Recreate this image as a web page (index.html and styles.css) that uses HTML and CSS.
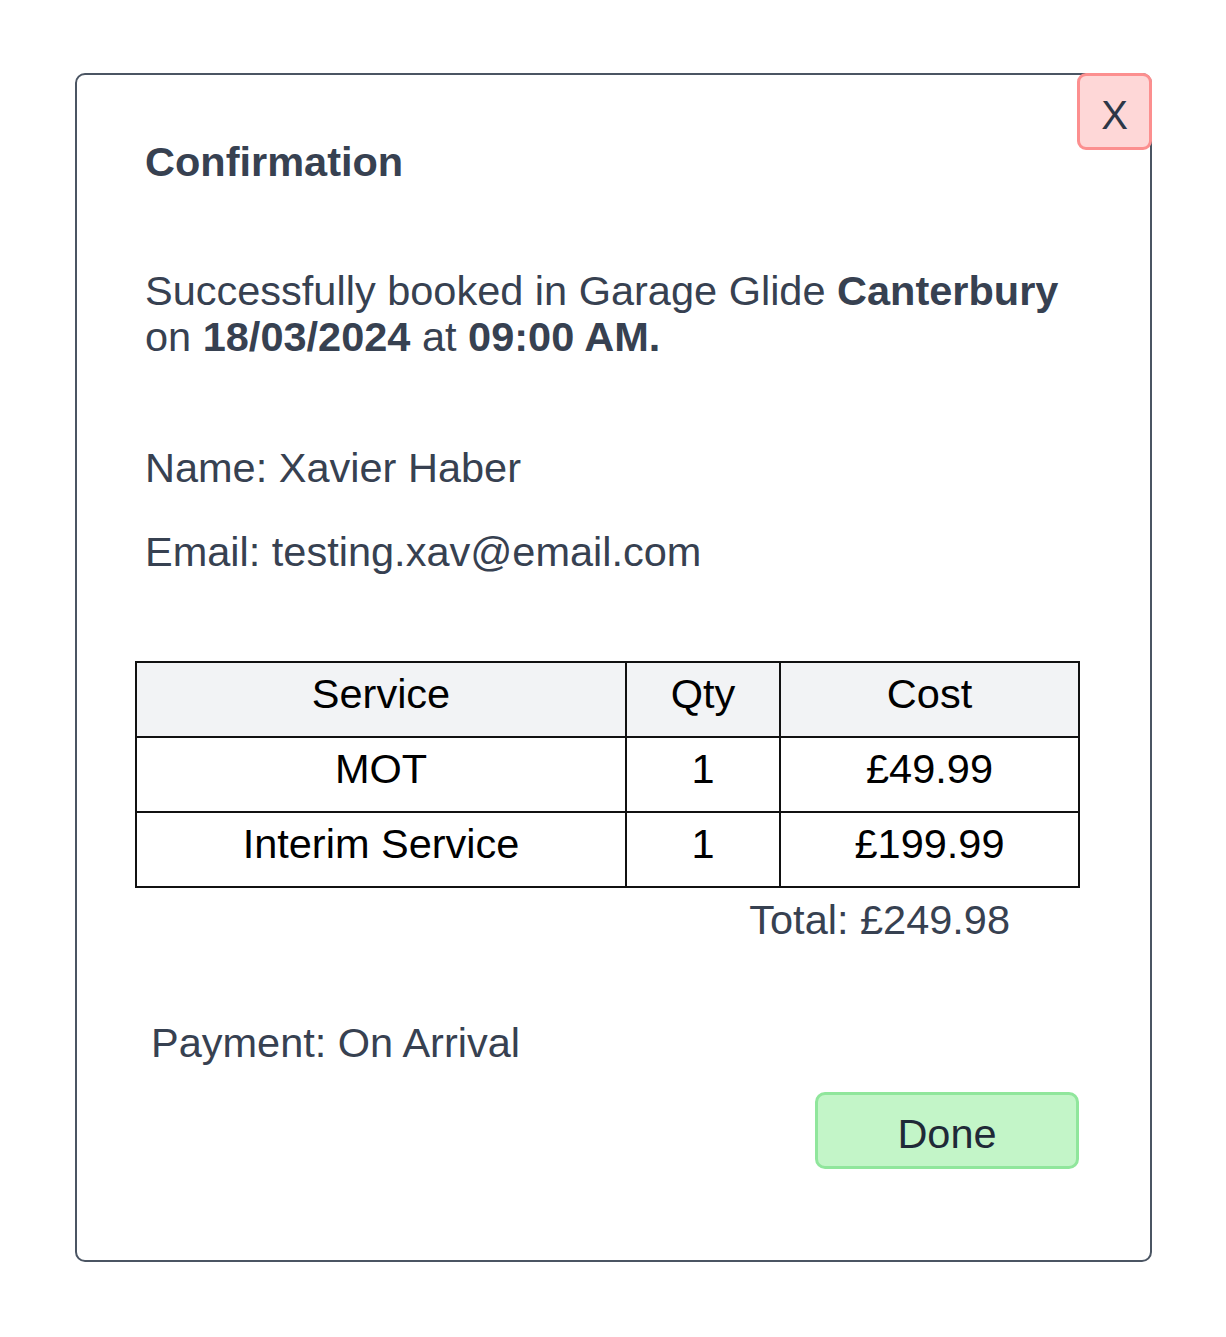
FILE: index.html
```html
<!DOCTYPE html>
<html lang="en">

<head>
    <meta charset="UTF-8">
    <meta name="viewport" content="width=device-width, initial-scale=1.0">
    <title>Booking Confirmation</title>
    <link rel="stylesheet" href="styles.css">
</head>

<body>

    <div class="modal">
        <button class="close-btn">X</button>

        <h2 class="modal-title">Confirmation</h2>

        <p class="summary">
            Successfully booked in Garage Glide <strong>Canterbury</strong>
            on <strong>18/03/2024</strong> at <strong>09:00 AM.</strong>
        </p>

        <p class="detail name">Name: Xavier Haber</p>
        <p class="detail email">Email: testing.xav@email.com</p>

        <table class="services">
            <thead>
                <tr>
                    <th class="col-service">Service</th>
                    <th class="col-qty">Qty</th>
                    <th class="col-cost">Cost</th>
                </tr>
            </thead>
            <tbody>
                <tr>
                    <td>MOT</td>
                    <td>1</td>
                    <td>£49.99</td>
                </tr>
                <tr>
                    <td>Interim Service</td>
                    <td>1</td>
                    <td>£199.99</td>
                </tr>
            </tbody>
        </table>

        <div class="total">Total: £249.98</div>

        <p class="payment">Payment: On Arrival</p>

        <div class="actions">
            <button class="done-btn">Done</button>
        </div>
    </div>

</body>

</html>
```

FILE: styles.css
```css
body,
html {
    margin: 0;
    background-color: #fff;
    font-family: "Liberation Sans", Arial, sans-serif;
}

body {
    padding: 73px 0 0 75px;
}

.modal {
    position: relative;
    box-sizing: border-box;
    width: 1077px;
    height: 1189px;
    padding: 64px 71px 0 68px;
    border: 2px solid #4b5563;
    border-radius: 10px;
    color: #374151;
    font-size: 41.5px;
    line-height: 46px;
}

.close-btn {
    position: absolute;
    top: -2px;
    right: -2px;
    width: 75px;
    height: 77px;
    padding: 8px 0 0;
    background-color: #fed7d7;
    border: 3px solid #fc8f8f;
    border-radius: 9px;
    color: #2d3748;
    font-family: inherit;
    font-size: 40px;
    cursor: pointer;
}

.modal-title {
    margin: 0;
    font-size: 41.5px;
    font-weight: bold;
}

.summary {
    margin: 83px 0 0;
}

.summary strong {
    font-weight: bold;
}

.detail {
    margin: 0;
}

.name {
    margin-top: 85px;
}

.email {
    margin-top: 38px;
}

.services {
    margin: 86px 0 0 -10px;
    width: 945px;
    table-layout: fixed;
    border-collapse: collapse;
    color: #000;
    font-size: 41.5px;
}

.services th,
.services td {
    height: 73px;
    padding: 0;
    border: 2px solid #111;
    text-align: center;
    vertical-align: top;
    font-weight: normal;
    line-height: 62px;
}

.services th {
    background-color: #f2f3f5;
}

.col-service {
    width: 488px;
}

.col-qty {
    width: 152px;
}

.total {
    margin-top: 9px;
    padding-right: 69px;
    text-align: right;
}

.payment {
    margin: 77px 0 0;
    padding-left: 6px;
}

.actions {
    display: flex;
    justify-content: flex-end;
    margin-top: 26px;
}

.done-btn {
    width: 264px;
    height: 77px;
    padding: 6px 0 0;
    background-color: #c3f5c8;
    border: 3px solid #90e69c;
    border-radius: 10px;
    color: #1f2937;
    font-family: inherit;
    font-size: 41.5px;
    cursor: pointer;
}
```
